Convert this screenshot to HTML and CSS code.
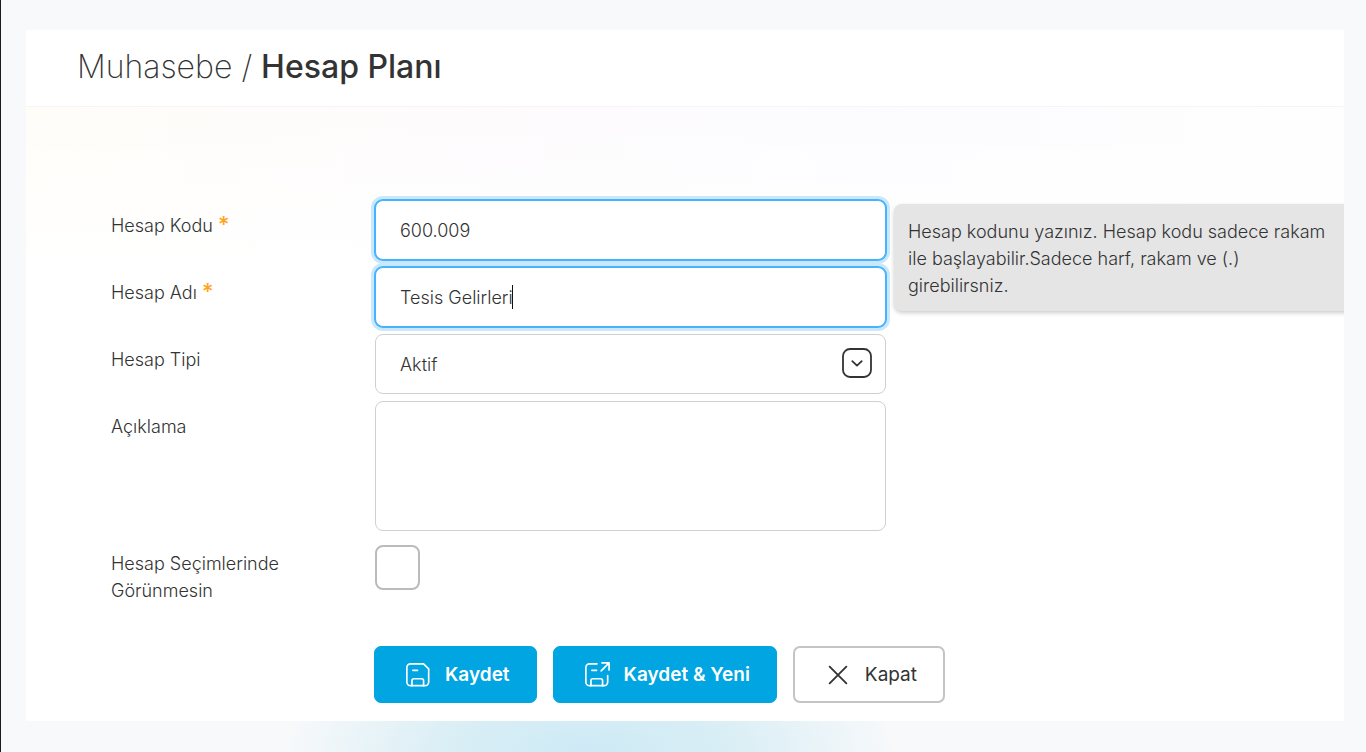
FILE: index.html
```html
<!DOCTYPE html>
<html lang="tr">
  <head>
    <meta charset="UTF-8" />
    <meta name="viewport" content="width=device-width, initial-scale=1.0" />
    <title>Muhasebe / Hesap Planı</title>
    <link rel="stylesheet" href="styles.css">
  </head>
  <body>
    <main class="panel">
      <header class="panel-header">
        <h1 class="title">Muhasebe / <strong>Hesap Planı</strong></h1>
      </header>
      <form class="account-form">
        <div class="row">
          <label class="label" for="code">Hesap Kodu <span class="required">*</span></label>
          <div class="field">
            <input class="control active" type="text" id="code" value="600.009" aria-describedby="code-hint" />
            <p class="hint" id="code-hint">Hesap kodunu yazınız. Hesap kodu sadece rakam ile başlayabilir.Sadece harf, rakam ve (.) girebilirsniz.</p>
          </div>
        </div>
        <div class="row">
          <label class="label" for="name">Hesap Adı <span class="required">*</span></label>
          <div class="field">
            <input class="control active" type="text" id="name" value="Tesis Gelirleri" />
            <span class="caret"></span>
          </div>
        </div>
        <div class="row">
          <label class="label" for="type">Hesap Tipi</label>
          <div class="field">
            <select class="control select" id="type">
              <option>Aktif</option>
              <option>Pasif</option>
            </select>
            <svg class="select-icon" viewBox="0 0 30 30" fill="none" stroke="currentColor" stroke-linecap="round" stroke-linejoin="round">
              <rect x="1" y="1" width="28" height="28" rx="7" stroke-width="1.8" />
              <path d="M10.3 13.2l4.7 4.4 4.7-4.4" stroke-width="1.8" />
            </svg>
          </div>
        </div>
        <div class="row">
          <label class="label" for="description">Açıklama</label>
          <div class="field">
            <textarea class="control textarea" id="description"></textarea>
          </div>
        </div>
        <div class="row row-check">
          <label class="label" for="hidden">Hesap Seçimlerinde Görünmesin</label>
          <div class="field">
            <input class="check" type="checkbox" id="hidden" />
          </div>
        </div>
        <!-- form buttons -->
        <div class="actions">
          <button class="btn btn-primary" type="submit">
            <svg class="icon" viewBox="0 0 28 28" fill="none" stroke="currentColor" stroke-width="1.8" stroke-linecap="round" stroke-linejoin="round">
              <path d="M6 2h14l5.500 5.500V21.500a4 4 0 0 1-4 4H6a4 4 0 0 1-4-4V6a4 4 0 0 1 4-4z" />
              <path d="M7.500 25.500V20a2 2 0 0 1 2-2h8.500a2 2 0 0 1 2 2v5.500M8.500 9h5" />
            </svg>
            Kaydet
          </button>
          <button class="btn btn-primary" type="button">
            <svg class="icon" viewBox="0 0 28 28" fill="none" stroke="currentColor" stroke-width="1.8" stroke-linecap="round" stroke-linejoin="round">
              <path d="M14 2H6a4 4 0 0 0-4 4v15.500a4 4 0 0 0 4 4h15.500a4 4 0 0 0 4-4V14.500" />
              <path d="M7.500 25.500V20a2 2 0 0 1 2-2h8.500a2 2 0 0 1 2 2v5.500M8.500 9h5" />
              <path d="M19.500 1h7.500v7.500M27 1l-8.500 8.500" />
            </svg>
            Kaydet &amp; Yeni
          </button>
          <button class="btn btn-default" type="button">
            <svg class="icon" viewBox="0 0 28 28" fill="none" stroke="currentColor" stroke-width="2" stroke-linecap="round">
              <path d="M5 5l18 18M23 5L5 23" />
            </svg>
            Kapat
          </button>
        </div>
      </form>
    </main>
  </body>
</html>
```
FILE: styles.css
```css
* {
  box-sizing: border-box;
}

body {
  margin: 0;
  min-height: 100vh;
  padding: 30px 22px 31px 25px;
  border-left: 1px solid #1a1a1d;
  background: radial-gradient(ellipse 310px 130px at 590px 100%, #cdeaf6 0%, #d9eef5 45%, rgba(248, 249, 251, 0) 100%) no-repeat #f8f9fb;
  font-family: Inter, "Liberation Sans", sans-serif;
  font-size: 18px;
  font-weight: 300;
  line-height: 27px;
  color: #333;
}

.panel {
  background-color: #fff;
  overflow: hidden;
}

.panel-header {
  padding: 17px 51px 19px;
  border-bottom: 1px solid #f5f5f7;
}

.title {
  margin: 0;
  font-size: 32px;
  font-weight: 200;
  line-height: 40px;
}

.title strong {
  font-weight: 500;
}

/* form */
.account-form {
  display: flex;
  flex-direction: column;
  gap: 7px;
  padding: 93px 0 18px 85px;
  background: linear-gradient(to bottom, rgba(255, 255, 255, 0), #fff 160px),
    linear-gradient(to right, #fffdf8, #fefbfd 35%, #fcfcff 65%, #fefefe);
}

.row {
  display: flex;
  align-items: flex-start;
}

.row-check {
  margin-top: 7px;
}

.label {
  width: 200px;
  margin-right: 64px;
  padding-top: 12px;
}

.row-check .label {
  padding-top: 5px;
}

.required {
  color: #ffa41c;
  font-size: 22px;
  font-weight: 500;
  line-height: 20px;
}

.field {
  position: relative;
  width: 511px;
}

.control {
  display: block;
  width: 100%;
  height: 60px;
  padding: 0 24px;
  border: 1px solid #d0d0d0;
  border-radius: 8px;
  outline: none;
  background-color: #fff;
  font: inherit;
  color: inherit;
}

.active {
  border-color: #45b3fd;
  box-shadow: 0 0 0 1px #45b3fd, 0 0 0 4px #c9e8fd;
}

/* text cursor after the account name */
.caret {
  position: absolute;
  top: 18px;
  left: 137px;
  width: 1px;
  height: 24px;
  background-color: #111;
}

.select {
  appearance: none;
}

.select-icon {
  position: absolute;
  top: 14px;
  right: 14px;
  width: 30px;
  height: 30px;
  pointer-events: none;
}

.textarea {
  height: 130px;
  padding: 16px 24px;
  resize: none;
}

.check {
  display: block;
  appearance: none;
  width: 45px;
  height: 45px;
  margin: 0;
  border: 2px solid #bbb;
  border-radius: 8px;
  background-color: #fff;
}

/* hint shown next to the field, runs off the panel edge */
.hint {
  position: absolute;
  top: 4px;
  left: 100%;
  width: 460px;
  margin: 0 0 0 8px;
  padding: 14px 14px 12px;
  border-radius: 8px;
  background-color: #e5e5e5;
  box-shadow: 0 2px 4px rgba(0, 0, 0, 0.2);
}

.actions {
  display: flex;
  gap: 16px;
  margin: 35px 0 0 263px;
}

.btn {
  display: flex;
  align-items: center;
  gap: 14px;
  height: 57px;
  padding: 0 26px 0 30px;
  border: 1px solid #00a5e1;
  border-radius: 7px;
  font: inherit;
  font-size: 19px;
}

.btn-primary {
  background-color: #00a5e1;
  color: #fff;
  font-weight: 600;
}

.btn-default {
  border: 2px solid #c4c4c4;
  background-color: #fff;
  color: #333;
  font-weight: 400;
}

.icon {
  width: 26px;
  height: 26px;
}
```
